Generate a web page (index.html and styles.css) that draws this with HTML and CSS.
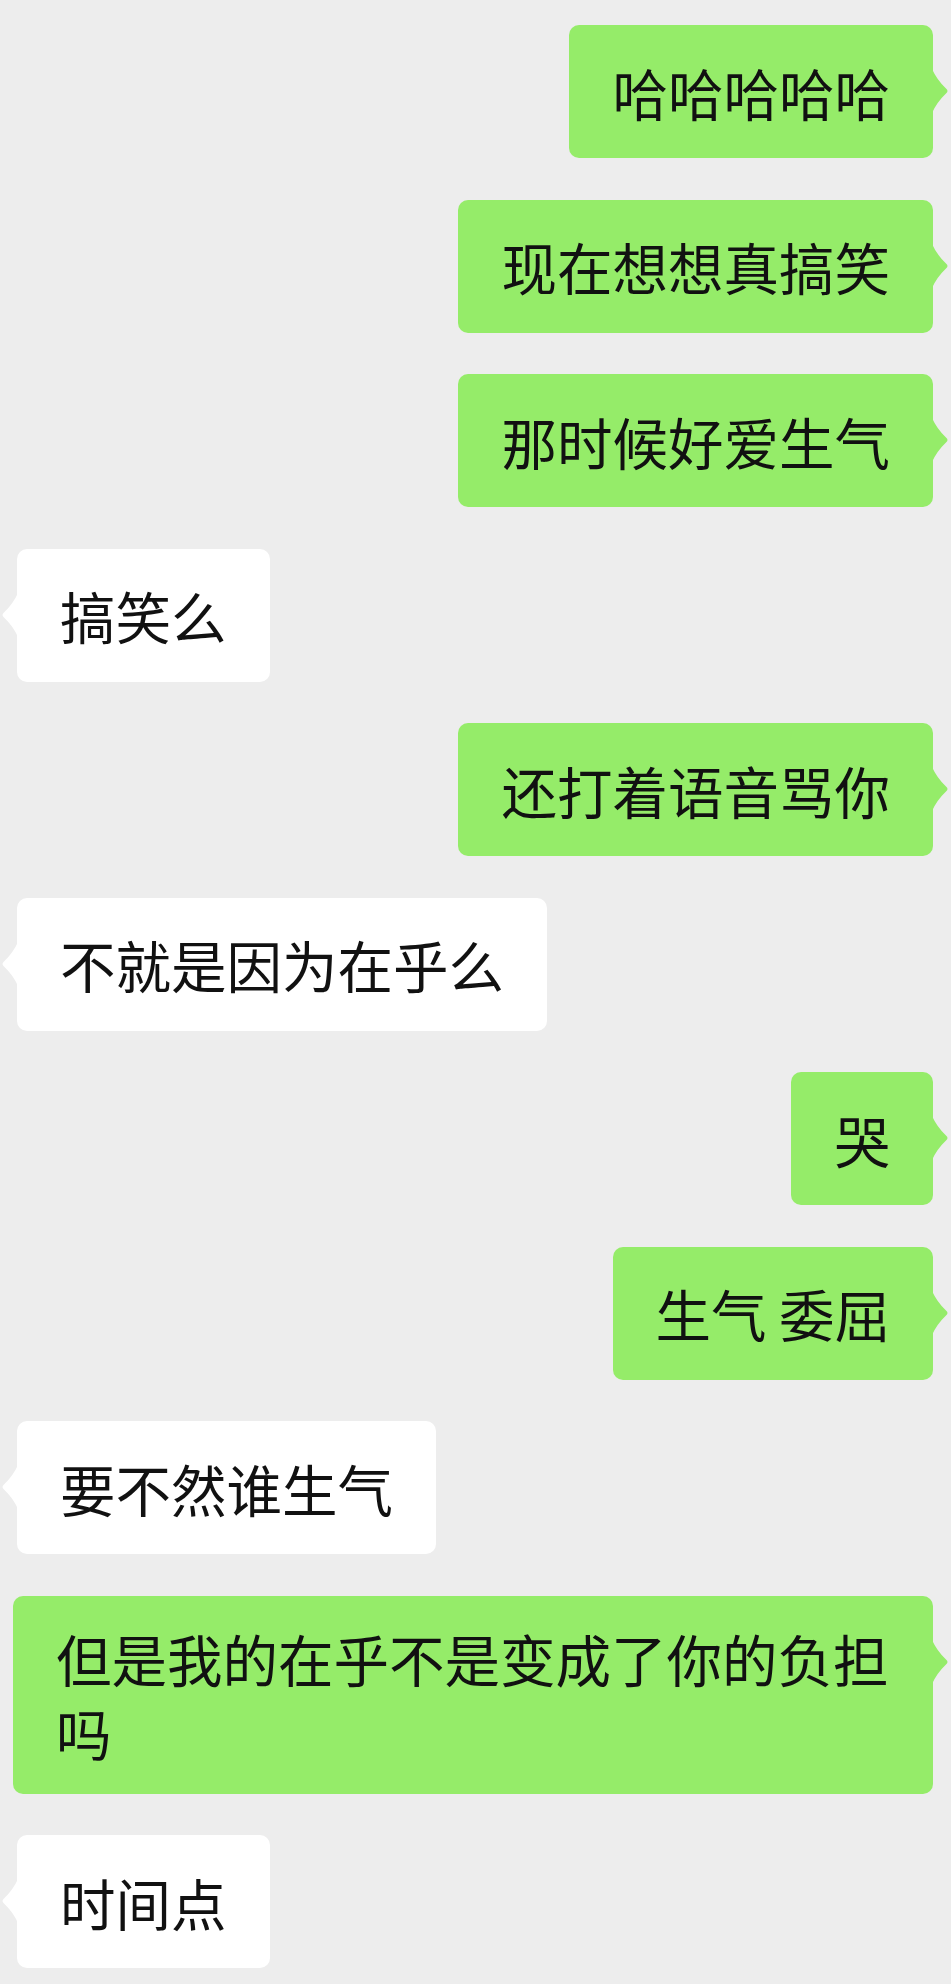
FILE: index.html
```html
<!DOCTYPE html>
<html lang="zh-CN">
<head>
<meta charset="utf-8">
<title>聊天</title>
<link rel="stylesheet" href="styles.css">
</head>
<body>
<div class="chat">
  <div class="row out"><div class="bubble">哈哈哈哈哈<svg class="tail" viewBox="0 0 17 44"><path d="M0 0 Q5 11 14 19.5 Q17 22 14 24.5 Q5 33 0 44 Z"/></svg></div></div>
  <div class="row out"><div class="bubble">现在想想真搞笑<svg class="tail" viewBox="0 0 17 44"><path d="M0 0 Q5 11 14 19.5 Q17 22 14 24.5 Q5 33 0 44 Z"/></svg></div></div>
  <div class="row out"><div class="bubble">那时候好爱生气<svg class="tail" viewBox="0 0 17 44"><path d="M0 0 Q5 11 14 19.5 Q17 22 14 24.5 Q5 33 0 44 Z"/></svg></div></div>
  <div class="row in"><div class="bubble">搞笑么<svg class="tail" viewBox="0 0 17 44"><path d="M17 0 Q12 11 3 19.5 Q0 22 3 24.5 Q12 33 17 44 Z"/></svg></div></div>
  <div class="row out"><div class="bubble">还打着语音骂你<svg class="tail" viewBox="0 0 17 44"><path d="M0 0 Q5 11 14 19.5 Q17 22 14 24.5 Q5 33 0 44 Z"/></svg></div></div>
  <div class="row in"><div class="bubble">不就是因为在乎么<svg class="tail" viewBox="0 0 17 44"><path d="M17 0 Q12 11 3 19.5 Q0 22 3 24.5 Q12 33 17 44 Z"/></svg></div></div>
  <div class="row out"><div class="bubble">哭<svg class="tail" viewBox="0 0 17 44"><path d="M0 0 Q5 11 14 19.5 Q17 22 14 24.5 Q5 33 0 44 Z"/></svg></div></div>
  <div class="row out"><div class="bubble">生气 委屈<svg class="tail" viewBox="0 0 17 44"><path d="M0 0 Q5 11 14 19.5 Q17 22 14 24.5 Q5 33 0 44 Z"/></svg></div></div>
  <div class="row in"><div class="bubble">要不然谁生气<svg class="tail" viewBox="0 0 17 44"><path d="M17 0 Q12 11 3 19.5 Q0 22 3 24.5 Q12 33 17 44 Z"/></svg></div></div>
  <div class="row out"><div class="bubble">但是我的在乎不是变成了你的负担吗<svg class="tail" viewBox="0 0 17 44"><path d="M0 0 Q5 11 14 19.5 Q17 22 14 24.5 Q5 33 0 44 Z"/></svg></div></div>
  <div class="row in"><div class="bubble">时间点<svg class="tail" viewBox="0 0 17 44"><path d="M17 0 Q12 11 3 19.5 Q0 22 3 24.5 Q12 33 17 44 Z"/></svg></div></div>
</div>
</body>
</html>
```

FILE: styles.css
```css
html, body {
  margin: 0;
  padding: 0;
  background: #ededed;
}

body {
  min-height: 1984px;
  font-family: "Noto Sans CJK SC", "Noto Sans", sans-serif;
  color: #111111;
}

.chat {
  display: flex;
  flex-direction: column;
  gap: 41.5px;
  padding: 25px 18px 18px 13px;
}

.row {
  display: flex;
}

.row.out {
  justify-content: flex-end;
}

.row.in {
  justify-content: flex-start;
  padding-left: 4px;
}

.bubble {
  position: relative;
  box-sizing: border-box;
  min-height: 133px;
  display: flex;
  align-items: center;
  padding: 25px 43px;
  border-radius: 10px;
  font-size: 55.5px;
  line-height: 74px;
  max-width: 920px;
}

.out .bubble {
  background: #95ec69;
}

.in .bubble {
  background: #ffffff;
}

.tail {
  position: absolute;
  top: 44px;
  width: 17px;
  height: 44px;
}

.out .tail {
  right: -16px;
  fill: #95ec69;
}

.in .tail {
  left: -16px;
  fill: #ffffff;
}
```
